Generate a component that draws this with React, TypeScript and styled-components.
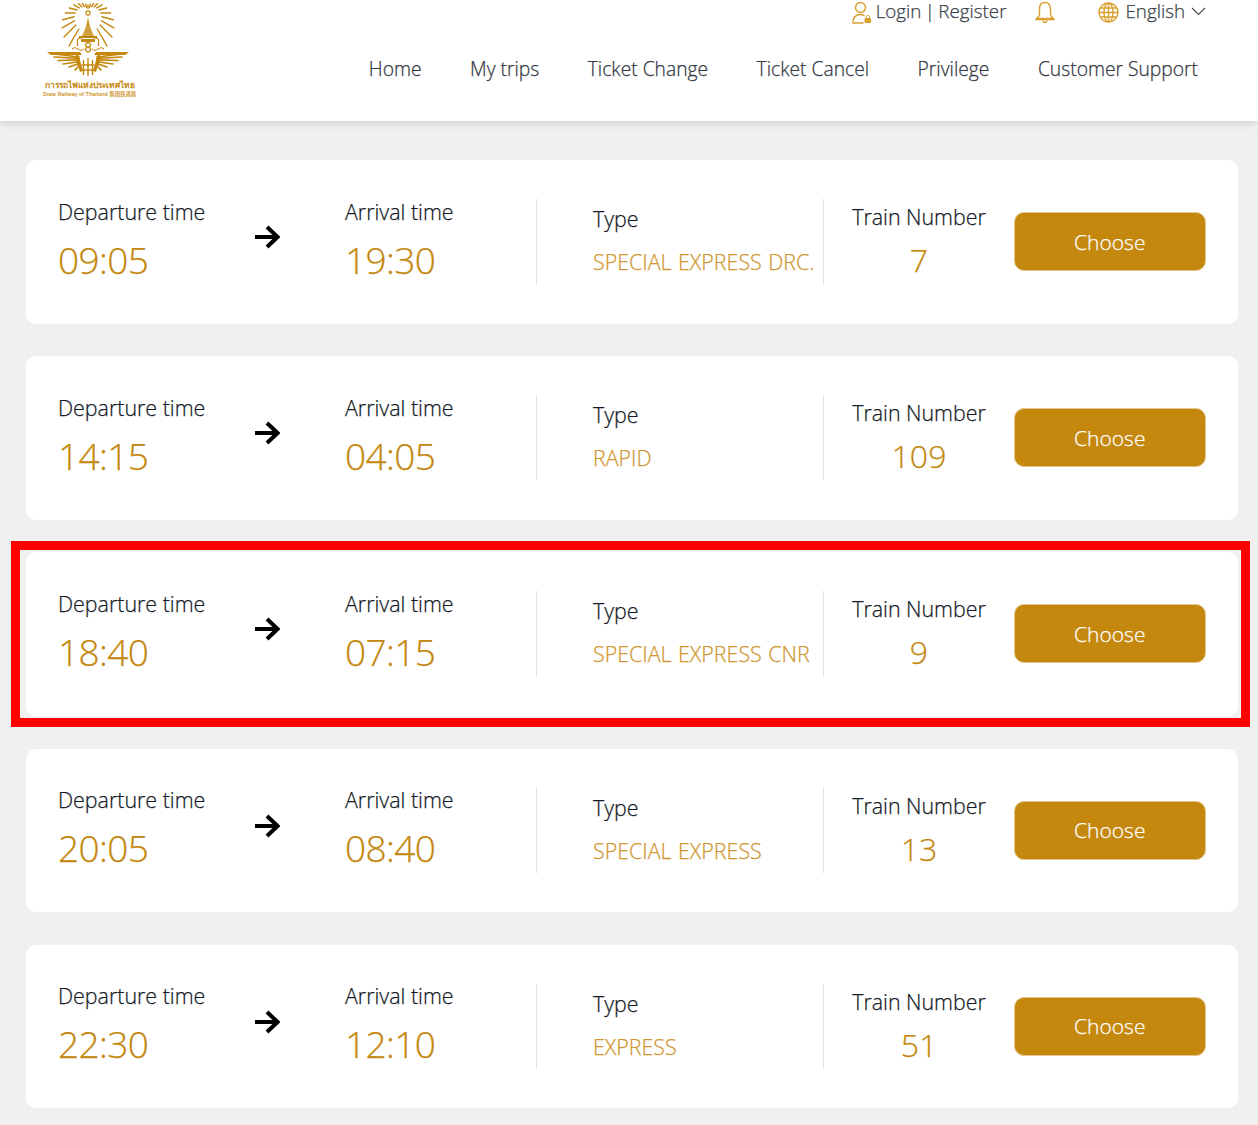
import React from "react";
import styled, { createGlobalStyle } from "styled-components";

const GOLD = "#c4880e";
const TEXT_GOLD = "#cf9631";
const FONT = `"Open Sans", "Noto Sans", sans-serif`;

const Global = createGlobalStyle`
  html, body { margin: 0; padding: 0; height: 1125px; overflow: hidden; background: #f0f0f0; }
  body { font-family: ${FONT}; font-weight: 300; color: #141a26; -webkit-text-stroke: 0.25px currentColor; }
  * { box-sizing: border-box; }
`;

const Header = styled.header`
  height: 121px;
  background: #fff;
  box-shadow: 0 2px 8px rgba(0, 0, 0, 0.14);
  display: flex;
  justify-content: space-between;
  padding: 3px 0 0 42px;
  position: relative;
`;
const LogoBox = styled.div`
  width: 95px;
  display: flex;
  flex-direction: column;
  align-items: center;
  -webkit-text-stroke: 0;
`;
const EmblemSvg = styled.svg`
  filter: blur(0.3px);
`;
const LogoThai = styled.div`
  font: 700 8.4px/10px "Noto Sans", "DejaVu Sans", sans-serif;
  color: ${GOLD};
  white-space: nowrap;
  margin-top: 3px;
`;
const LogoLatin = styled.div`
  font: 700 5.4px/8px "Liberation Sans", "Noto Sans CJK SC", sans-serif;
  color: ${TEXT_GOLD};
  white-space: nowrap;
`;
const HeaderRight = styled.div`
  display: flex;
  flex-direction: column;
  align-items: flex-end;
`;
const TopBar = styled.div`
  height: 20px;
  margin-top: -2px;
  padding-right: 52px;
  display: flex;
  align-items: center;
  font-size: 18.8px;
  color: #3a3f47;
`;
const TopItem = styled.span<{ $gap?: number; $ml?: number }>`
  display: inline-flex;
  align-items: center;
  gap: ${(p) => p.$gap ?? 6}px;
  margin-left: ${(p) => p.$ml ?? 0}px;
  line-height: 20px;
  word-spacing: -1.5px;
`;
const TopIconSlot = styled.span`
  display: inline-flex;
  margin-top: 2px;
`;
const Nav = styled.nav`
  margin-top: 34px;
  padding-right: 60px;
  display: flex;
  gap: 48.5px;
  font-size: 19.25px;
  line-height: 28px;
  color: #33383f;
`;
const NavLink = styled.a`
  white-space: nowrap;
`;
const List = styled.main`
  padding: 39px 20px 0 26px;
  display: flex;
  flex-direction: column;
  gap: 32.7px;
`;
const Card = styled.section<{ $marked?: boolean }>`
  position: relative;
  height: 163.5px;
  background: #fff;
  border-radius: 10px;
  padding: 39px 32px 0;
  display: grid;
  grid-template-columns: 196px 91px 192px 286px 191px 192px;
  grid-template-rows: 85px;
  ${(p) =>
    p.$marked &&
    `&::after {
      content: "";
      position: absolute;
      left: -15px; right: -12px; top: -11px; bottom: -11px;
      border: 9px solid #ff0000;
      pointer-events: none;
    }`}
`;
const Column = styled.div`
  display: flex;
  flex-direction: column;
`;
const Label = styled.div`
  font-size: 21.4px;
  line-height: 28px;
  white-space: nowrap;
`;
const TimeLabel = styled(Label)`
  margin-top: -1.5px;
`;
const Time = styled.div`
  font-size: 37px;
  line-height: 48px;
  margin-top: 10px;
  color: ${GOLD};
  letter-spacing: -0.6px;
`;
const ArrowCell = styled.div`
  padding-top: 25px;
`;
const ArrivalColumn = styled(Column)`
  border-right: 1px solid #e2e2e2;
`;
const TypeColumn = styled(Column)`
  padding: 6px 0 0 56px;
`;
const TypeValue = styled.div`
  font-size: 21.4px;
  word-spacing: 1px;
  line-height: 28px;
  margin-top: 15px;
  color: ${TEXT_GOLD};
  white-space: nowrap;
`;
const TrainColumn = styled(Column)`
  border-left: 1px solid #e2e2e2;
  align-items: center;
  padding-top: 4px;
`;
const TrainNumber = styled.div`
  font-size: 32px;
  line-height: 40px;
  margin-top: 9px;
  color: ${GOLD};
`;
const Choose = styled.button`
  height: 59px;
  width: 192.5px;
  margin: 13px 0 0 -0.5px;
  border: 1px solid #e0c68c;
  border-radius: 10px;
  background: ${GOLD};
  color: #fff;
  font: 300 21px/1 ${FONT};
  padding-top: 2px;
`;

const Emblem = () => {
  const cx = 46;
  const cy = 10;
  const rays = Array.from({ length: 21 }, (_, i) => {
    const off = -150 + (i * 300) / 20;
    const a = ((off - 90) * Math.PI) / 180;
    const t = Math.abs(off) / 150;
    const r0 = 4.5 + 14 * t;
    const r1 = 8 + 30 * Math.pow(t, 1.4);
    return (
      <line
        key={i}
        x1={cx + r0 * Math.cos(a)}
        y1={cy + r0 * Math.sin(a)}
        x2={cx + r1 * Math.cos(a)}
        y2={cy + r1 * Math.sin(a)}
      />
    );
  });
  const wing = (flip: boolean) => {
    const tips: [number, number][] = [
      [8, 50.5],
      [12, 54],
      [16, 57.5],
      [21, 61],
      [27, 64],
      [33, 67],
    ];
    return (
      <g transform={flip ? "translate(92 0) scale(-1 1)" : undefined}>
        <path d="M5 49 H38 L40 52 H9Z" fill={GOLD} />
        <g stroke={GOLD} strokeWidth="1.7" strokeLinecap="round">
          {tips.map(([x, y]) => (
            <line key={x} x1={37} y1={54 + (x - 8) * 0.35} x2={x} y2={y} />
          ))}
        </g>
        <path d="M36 50 L41 68 L38 69 L33 54Z" fill={GOLD} />
      </g>
    );
  };
  return (
    <EmblemSvg width="95" height="74" viewBox="0 0 95 74" aria-label="emblem">
      <g stroke={GOLD} strokeWidth="1.4" strokeLinecap="round" fill="none">
        {rays}
      </g>
      <circle cx={cx} cy={cy} r="2.2" fill="none" stroke={GOLD} strokeWidth="1.2" />
      <path d="M46 14 L48.5 25 L52 33 H40 L43.5 25Z" fill={GOLD} opacity="0.8" />
      <path d="M37 33 H55 V35 H37Z M39 36 H53 V39 H39Z" fill={GOLD} />
      <path d="M35.5 36 V43 M56.5 36 V43 M35.5 36 Q46 32 56.5 36" stroke={GOLD} strokeWidth="1.2" fill="none" />
      <path
        d="M46 39.5 a2.5 2.5 0 1 0 0.1 0 M46 44 a2.5 2.5 0 1 0 0.1 0"
        fill="none"
        stroke={GOLD}
        strokeWidth="1.4"
      />
      <path
        d="M30 46 q3 -3 6 0 t6 0 M62 46 q-3 -3 -6 0 t-6 0"
        fill="none"
        stroke={GOLD}
        strokeWidth="1"
      />
      {wing(false)}
      {wing(true)}
      <path
        d="M41.5 57 V72 M46 55 V73 M50.5 57 V72 M39.5 62 H52.5 M39.5 67 H52.5"
        stroke={GOLD}
        strokeWidth="1.4"
        fill="none"
      />
    </EmblemSvg>
  );
};

const UserIcon = () => (
  <svg width="20" height="23" viewBox="0 0 20 23" fill="none" stroke="#d9a02f" strokeWidth="1.5">
    <circle cx="8.5" cy="6.5" r="5" />
    <path d="M1 22 C1 16 4 13.5 8.5 13.5 C10 13.5 11 13.8 12 14.3 M1 22 H11" strokeLinecap="round" />
    <rect x="12.5" y="17" width="6.5" height="5" rx="1" fill="#d9a02f" stroke="none" />
    <path d="M14 17 V15.8 a1.8 1.8 0 0 1 3.5 0 V17" strokeWidth="1" />
  </svg>
);
const BellIcon = () => (
  <svg width="20" height="22" viewBox="0 0 20 22" fill="none" stroke="#d9a02f" strokeWidth="1.4">
    <path d="M10 1.5 C6 1.5 4.5 4.5 4.5 8 V13 C4.5 15 3 16.5 1.5 17.5 H18.5 C17 16.5 15.5 15 15.5 13 V8 C15.5 4.5 14 1.5 10 1.5Z" strokeLinejoin="round" />
    <path d="M1 18.5 H19" strokeWidth="1.6" strokeLinecap="round" />
    <path d="M8 19.5 a2 2 0 0 0 4 0" />
  </svg>
);
const GlobeIcon = () => (
  <svg width="21" height="21" viewBox="0 0 21 21" fill="none" stroke="#d9a02f" strokeWidth="1.4">
    <circle cx="10.5" cy="10.5" r="9.5" />
    <ellipse cx="10.5" cy="10.5" rx="4.5" ry="9.5" />
    <path d="M10.5 1 V20 M1 10.5 H20 M2.5 6 H18.5 M2.5 15 H18.5" />
  </svg>
);
const ChevronIcon = () => (
  <svg width="15" height="9" viewBox="0 0 15 9" fill="none" stroke="#4a4f56" strokeWidth="1.2">
    <path d="M1 1 L7.5 7.5 L14 1" />
  </svg>
);
const ArrowIcon = () => (
  <svg width="26" height="26" viewBox="0 0 26 26" fill="none" stroke="#000" strokeWidth="4">
    <path d="M1 13 H23" />
    <path d="M13 3 L23.5 13 L13 23" />
  </svg>
);

const trips = [
  { dep: "09:05", arr: "19:30", type: "SPECIAL EXPRESS DRC.", num: "7" },
  { dep: "14:15", arr: "04:05", type: "RAPID", num: "109" },
  { dep: "18:40", arr: "07:15", type: "SPECIAL EXPRESS CNR", num: "9", marked: true },
  { dep: "20:05", arr: "08:40", type: "SPECIAL EXPRESS", num: "13" },
  { dep: "22:30", arr: "12:10", type: "EXPRESS", num: "51" },
];
const links = ["Home", "My trips", "Ticket Change", "Ticket Cancel", "Privilege", "Customer Support"];

export default function App() {
  return (
    <>
      <Global />
      <Header>
        <LogoBox>
          <Emblem />
          <LogoThai>การรถไฟแห่งประเทศไทย</LogoThai>
          <LogoLatin>State Railway of Thailand 泰国铁道局</LogoLatin>
        </LogoBox>
        <HeaderRight>
          <TopBar>
            <TopItem $gap={4}>
              <TopIconSlot>
                <UserIcon />
              </TopIconSlot>
              Login | Register
            </TopItem>
            <TopItem $ml={29}>
              <TopIconSlot>
                <BellIcon />
              </TopIconSlot>
            </TopItem>
            <TopItem $ml={43}>
              <TopIconSlot>
                <GlobeIcon />
              </TopIconSlot>
              English
              <ChevronIcon />
            </TopItem>
          </TopBar>
          <Nav>
            {links.map((l) => (
              <NavLink key={l}>{l}</NavLink>
            ))}
          </Nav>
        </HeaderRight>
      </Header>
      <List>
        {trips.map((t) => (
          <Card key={t.dep} $marked={t.marked}>
            <Column>
              <TimeLabel>Departure time</TimeLabel>
              <Time>{t.dep}</Time>
            </Column>
            <ArrowCell>
              <ArrowIcon />
            </ArrowCell>
            <ArrivalColumn>
              <TimeLabel>Arrival time</TimeLabel>
              <Time>{t.arr}</Time>
            </ArrivalColumn>
            <TypeColumn>
              <Label>Type</Label>
              <TypeValue>{t.type}</TypeValue>
            </TypeColumn>
            <TrainColumn>
              <Label>Train Number</Label>
              <TrainNumber>{t.num}</TrainNumber>
            </TrainColumn>
            <Choose>Choose</Choose>
          </Card>
        ))}
      </List>
    </>
  );
}
